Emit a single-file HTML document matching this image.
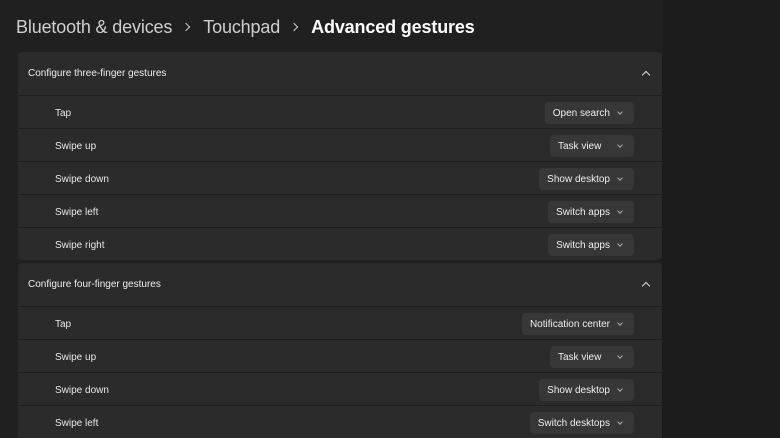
<!DOCTYPE html>
<html><head><style>
html,body{margin:0;width:780px;height:438px;overflow:hidden}
body{background:#202020;font-family:"Liberation Sans",sans-serif;color:#fff;position:relative}
.side{position:absolute;left:662px;top:0;width:118px;height:438px;background:#1c1c1c}
.bc{position:absolute;left:16px;top:17px;font-size:18px;color:#cfcfcf;white-space:nowrap;letter-spacing:-0.15px}
.bc b{color:#fff;font-weight:bold}
.bc .s{display:inline-block;width:5px;height:5px;border-right:1.5px solid #ccc;border-top:1.5px solid #ccc;transform:rotate(45deg);margin:0 14px 0 11px;position:relative;top:-3px}
.card{position:absolute;left:18px;width:644px;background:#2b2b2b;border-radius:4px;overflow:hidden}
.hd{height:43px;position:relative;font-size:10px;line-height:44px;padding-left:10px;color:#eee;border-bottom:1px solid #1f1f1f}
.hd i{position:absolute;right:13px;top:20px;width:5px;height:5px;border-left:1.2px solid #ddd;border-top:1.2px solid #ddd;transform:rotate(45deg)}
.row{height:32px;border-bottom:1px solid #1f1f1f;position:relative;font-size:10px;line-height:35px;padding-left:37px;color:#e8e8e8}
.dd{position:absolute;right:28px;top:6px;height:22px;line-height:23px;background:#373737;border-radius:4px;padding:0 24px 0 8px;min-width:52px;font-size:10px;color:#eee;box-sizing:content-box}
.dd:after{content:"";position:absolute;right:12px;top:8px;width:3px;height:3px;border-right:1px solid #aaa;border-bottom:1px solid #aaa;transform:rotate(45deg)}
</style></head><body>
<div class="side"></div>
<div class="bc">Bluetooth &amp; devices<span class="s"></span>Touchpad<span class="s"></span><b>Advanced gestures</b></div>
<div class="card" style="top:52px;height:208px">
<div class="hd">Configure three-finger gestures<i></i></div>
<div class="row">Tap<span class="dd">Open search</span></div>
<div class="row">Swipe up<span class="dd">Task view</span></div>
<div class="row">Swipe down<span class="dd">Show desktop</span></div>
<div class="row">Swipe left<span class="dd">Switch apps</span></div>
<div class="row" style="border:0">Swipe right<span class="dd">Switch apps</span></div>
</div>
<div class="card" style="top:263px;height:190px">
<div class="hd">Configure four-finger gestures<i></i></div>
<div class="row">Tap<span class="dd">Notification center</span></div>
<div class="row">Swipe up<span class="dd">Task view</span></div>
<div class="row">Swipe down<span class="dd">Show desktop</span></div>
<div class="row">Swipe left<span class="dd">Switch desktops</span></div>
</div>
</body></html>
